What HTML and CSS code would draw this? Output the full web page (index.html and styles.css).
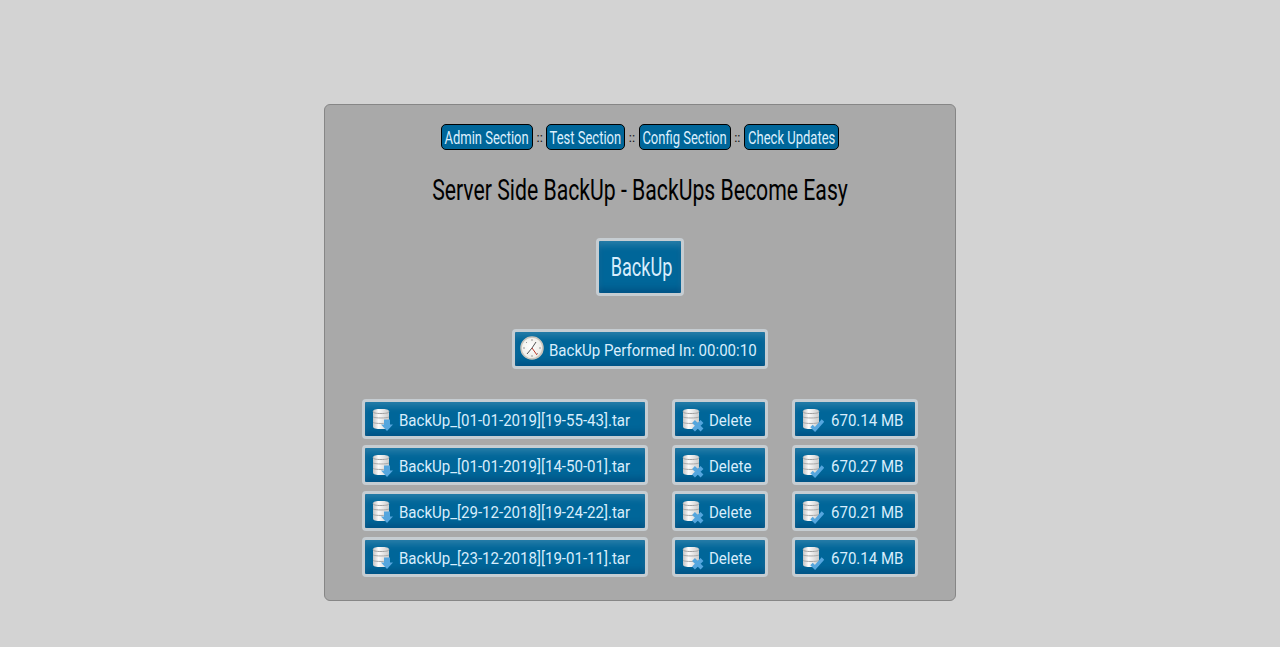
FILE: index.html
```html
<!DOCTYPE html>
<html lang="en">

<head>
    <meta charset="UTF-8">
    <meta name="viewport" content="width=device-width, initial-scale=1.0">
    <title>Server Side BackUp</title>
    <link rel="stylesheet" href="styles.css">
</head>

<body>
    <svg class="sprites" width="0" height="0">
        <defs>
            <linearGradient id="disk" x1="0" y1="0" x2="1" y2="0">
                <stop offset="0" stop-color="#c4c4c4" />
                <stop offset="0.35" stop-color="#fbfbfb" />
                <stop offset="1" stop-color="#cbcbcb" />
            </linearGradient>
            <radialGradient id="face" cx="0.45" cy="0.45" r="0.6">
                <stop offset="0" stop-color="#ffffff" />
                <stop offset="0.8" stop-color="#f0eee9" />
                <stop offset="1" stop-color="#b9b4aa" />
            </radialGradient>
            <g id="db">
                <path d="M1 3.500C1 1.500 4 1 9 1S17 1.500 17 3.500V18.500C17 20.500 14 21 9 21S1 20.500 1 18.500Z" fill="url(#disk)" />
                <path d="M1 3.500C1 5 4 5.500 9 5.500S17 5 17 3.500" fill="none" stroke="#a0a0a0" />
                <path d="M1 9C3 10.300 15 10.300 17 9M1 14.500C3 15.800 15 15.800 17 14.500" fill="none" stroke="#a8a8a8" />
            </g>
            <g id="ico-down">
                <use href="#db" />
                <path class="mark" d="M9 16.500H12V11.500H18V16.500H21L15 23Z" />
            </g>
            <g id="ico-del">
                <use href="#db" />
                <path class="x" d="M11.500 13.500L20 22M20 13.500L11.500 22" />
            </g>
            <g id="ico-ok">
                <use href="#db" />
                <path class="v" d="M9.500 18L13 21.500L21 12.500" />
            </g>
        </defs>
    </svg>

    <div class="panel">
        <div class="nav">
            <a class="nav-link w-admin" href="#"><span>Admin Section</span></a>
            <span class="sep">::</span>
            <a class="nav-link w-test" href="#"><span>Test Section</span></a>
            <span class="sep">::</span>
            <a class="nav-link w-config" href="#"><span>Config Section</span></a>
            <span class="sep">::</span>
            <a class="nav-link w-check" href="#"><span>Check Updates</span></a>
        </div>

        <h1 class="title"><span>Server Side BackUp - BackUps Become Easy</span></h1>

        <button class="btn backup-btn"><span>BackUp</span></button>

        <div class="btn perf">
            <svg class="clock" viewBox="0 0 24 24" width="24" height="24">
                <circle cx="12" cy="12" r="11" fill="url(#face)" stroke="#c9c5bc" stroke-width="1.500" />
                <path d="M12 12L7 18M12 12L16 6" stroke="#555" stroke-width="1" />
                <path d="M12 12L17 19" stroke="#c0392b" stroke-width="1" />
                <path d="M12 3V5M12 19V21M3 12H5M19 12H21M6 6L7 7M18 18L17 17" stroke="#999" stroke-width="1" />
            </svg>
            <span class="txt">BackUp Performed In: 00:00:10</span>
        </div>

        <div class="files">
            <a class="btn cell" href="#"><svg class="ico" viewBox="0 0 22 24" width="22" height="24"><use href="#ico-down" /></svg><span class="txt">BackUp_[01-01-2019][19-55-43].tar</span></a>
            <a class="btn cell" href="#"><svg class="ico" viewBox="0 0 22 24" width="22" height="24"><use href="#ico-del" /></svg><span class="txt">Delete</span></a>
            <div class="btn cell"><svg class="ico" viewBox="0 0 22 24" width="22" height="24"><use href="#ico-ok" /></svg><span class="txt size">670.14 MB</span></div>

            <a class="btn cell" href="#"><svg class="ico" viewBox="0 0 22 24" width="22" height="24"><use href="#ico-down" /></svg><span class="txt">BackUp_[01-01-2019][14-50-01].tar</span></a>
            <a class="btn cell" href="#"><svg class="ico" viewBox="0 0 22 24" width="22" height="24"><use href="#ico-del" /></svg><span class="txt">Delete</span></a>
            <div class="btn cell"><svg class="ico" viewBox="0 0 22 24" width="22" height="24"><use href="#ico-ok" /></svg><span class="txt size">670.27 MB</span></div>

            <a class="btn cell" href="#"><svg class="ico" viewBox="0 0 22 24" width="22" height="24"><use href="#ico-down" /></svg><span class="txt">BackUp_[29-12-2018][19-24-22].tar</span></a>
            <a class="btn cell" href="#"><svg class="ico" viewBox="0 0 22 24" width="22" height="24"><use href="#ico-del" /></svg><span class="txt">Delete</span></a>
            <div class="btn cell"><svg class="ico" viewBox="0 0 22 24" width="22" height="24"><use href="#ico-ok" /></svg><span class="txt size">670.21 MB</span></div>

            <a class="btn cell" href="#"><svg class="ico" viewBox="0 0 22 24" width="22" height="24"><use href="#ico-down" /></svg><span class="txt">BackUp_[23-12-2018][19-01-11].tar</span></a>
            <a class="btn cell" href="#"><svg class="ico" viewBox="0 0 22 24" width="22" height="24"><use href="#ico-del" /></svg><span class="txt">Delete</span></a>
            <div class="btn cell"><svg class="ico" viewBox="0 0 22 24" width="22" height="24"><use href="#ico-ok" /></svg><span class="txt size">670.14 MB</span></div>
        </div>
    </div>
</body>

</html>
```

FILE: styles.css
```css
* {
    margin: 0px;
    padding: 0px;
    box-sizing: border-box;
}

body {
    font-family: "Roboto", sans-serif;
    background: #d3d3d3;
    overflow: hidden;
}

.sprites {
    display: block;
}

.panel {
    width: 632px;
    height: 497px;
    margin: 104px auto 0;
    padding-top: 19px;
    background: #a9a9a9;
    border: 1px solid #868686;
    border-radius: 6px;
    text-align: center;
}

.nav {
    display: flex;
    justify-content: center;
    align-items: center;
    height: 26px;
}

.nav-link {
    display: flex;
    align-items: center;
    justify-content: center;
    height: 26px;
    background: #006699;
    border: 1px solid #000;
    border-radius: 5px;
    color: #dceffd;
    text-decoration: none;
    font-size: 19px;
    white-space: nowrap;
}

.nav-link span {
    display: inline-block;
    transform: scaleX(0.685);
}

.w-admin {
    width: 92px;
}

.w-test {
    width: 79px;
}

.w-config {
    width: 92px;
}

.w-check {
    width: 95px;
}

.sep {
    width: 13.33px;
    font-size: 13px;
    color: #111;
}

.title {
    margin-top: 20px;
    height: 40px;
    font-weight: 400;
    font-size: 30px;
    line-height: 40px;
    color: #000;
    white-space: nowrap;
}

.title span {
    display: inline-block;
    transform: scaleX(0.707);
}

.btn {
    background: #006699;
    border: 3px solid #c6cdd2;
    border-radius: 4px;
    box-shadow: inset 0 6px 7px -2px rgba(255, 255, 255, 0.16), inset 0 -6px 7px -2px rgba(0, 0, 50, 0.2);
    color: #d8edfc;
    text-decoration: none;
}

.backup-btn {
    display: block;
    width: 88px;
    height: 58px;
    margin: 28px auto 0;
    padding-right: 4px;
    font-family: inherit;
    font-size: 25px;
    white-space: nowrap;
}

.backup-btn span {
    display: inline-block;
    transform: scaleX(0.725);
}

.perf {
    display: flex;
    align-items: center;
    gap: 5px;
    width: 256px;
    height: 40px;
    margin: 33px auto 0;
    padding-left: 5px;
    font-size: 16px;
    white-space: nowrap;
}

.perf .clock {
    margin-bottom: 2px;
}

.perf .txt {
    margin-top: 2px;
}

.files {
    display: grid;
    grid-template-columns: 286px 96px 126px;
    grid-auto-rows: 40px;
    column-gap: 24px;
    row-gap: 6px;
    justify-content: center;
    margin-top: 30px;
}

.cell {
    display: flex;
    align-items: center;
    gap: 5px;
    padding-left: 7px;
    padding-top: 2px;
    font-size: 16px;
    white-space: nowrap;
}

.txt {
    display: inline-block;
    transform: scaleX(0.94);
    transform-origin: left center;
}

.size {
    margin-left: 2px;
}

.ico,
.clock {
    flex: none;
}

.mark {
    fill: #55a6de;
}

.x {
    fill: none;
    stroke: #55a6de;
    stroke-width: 4;
}

.v {
    fill: none;
    stroke: #55a6de;
    stroke-width: 3.5;
}
```
